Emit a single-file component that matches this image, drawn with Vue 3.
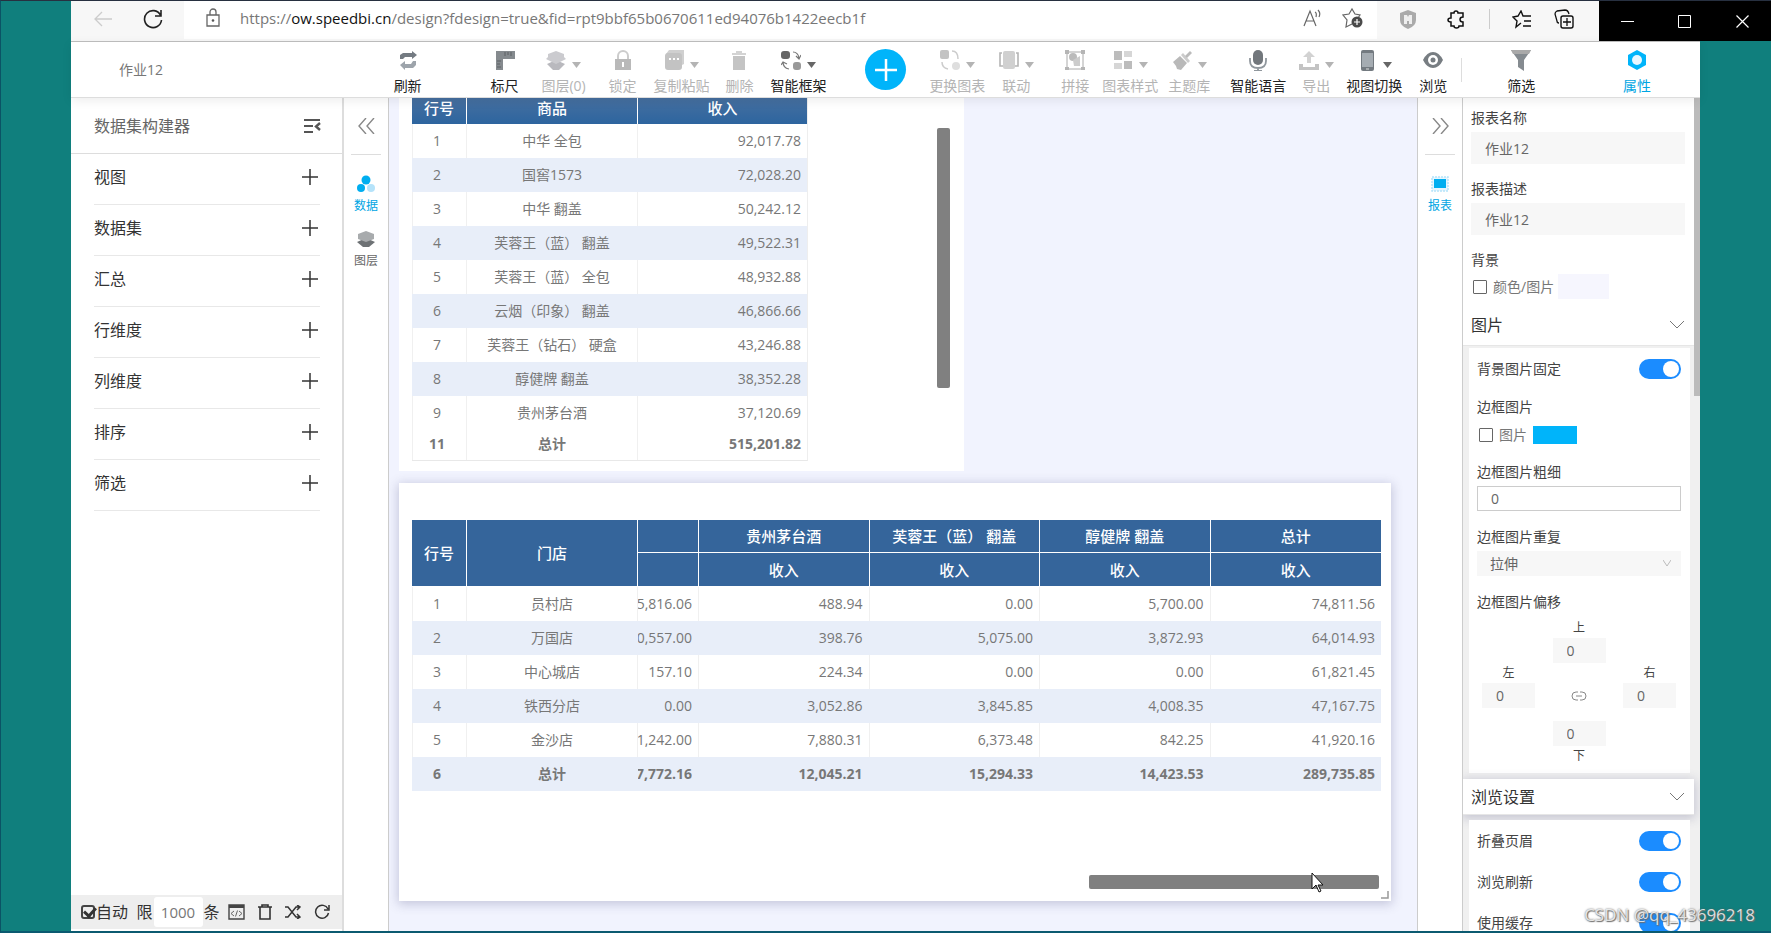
<script setup>
import { ref } from 'vue'

const icons = {
  refresh: '<path d="M2 9V5l3-2h9V1l5 4-5 4V7H7L5 9z" fill="#747b82"/><path d="M18 11v4l-3 3H7v2l-5-5 5-4v3h6l2-3z" fill="#9da4ab"/>',
  ruler: '<path d="M1 1h19v8H8v11H1z" fill="#858a8e"/><path d="M10 2v4M13 2v3M16 2v4M2 11h4M2 14h3M2 17h4" stroke="#5c6165"/>',
  layers: '<path d="M10 10l9 4-6 6H7l-6-6z" fill="#b9b9be"/><path d="M10 1l8 3v3l2 2-10 5L0 9l2-2V4z" fill="#cbcbcf"/>',
  lock: '<path d="M5 9V6a5 5 0 0 1 10 0v3" fill="none" stroke="#ccc" stroke-width="2"/><path d="M2 9h16v11H2z" fill="#b9b9b9"/><path d="M10 12v5" stroke="#fff" stroke-width="2"/>',
  copy: '<path d="M5 0h15v14l-4 2V4H2l3-4z" fill="#d0d0d0"/><rect x="1" y="3" width="17" height="17" rx="3" fill="#c3c3c3"/><path d="M5 9h2m2 0h2m2 0h2" stroke="#fff" stroke-width="2"/>',
  trash: '<path d="M3 3h14v2H3zM7 1h6v2H7z" fill="#d3d3d3"/><path d="M4 6h12v14H4z" fill="#c4c4c4"/>',
  frame: '<rect x="0" y="1" width="9" height="8" rx="3" fill="#666"/><rect x="12" y="12" width="8" height="8" rx="3" fill="#999"/><path d="M12 2q5 0 6 6m-3-2 3 3 2-4M8 19q-6-1-6-7m-2 3 2-3 4 2" fill="none" stroke="#777" stroke-width="1.2"/>',
  change: '<rect x="0" y="0" width="9" height="9" rx="2" fill="#c3c3c3"/><circle cx="16" cy="16" r="4" fill="#dedede"/><path d="M12 1q6 0 6 8M8 19q-6-1-6-7" fill="none" stroke="#ccc" stroke-width="1.5"/>',
  link: '<rect x="4" y="1" width="12" height="18" rx="2" fill="#d0d0d0"/><path d="M3 3H1v13h3M17 3h2v13h-3" fill="none" stroke="#b5b5b5" stroke-width="1.6"/>',
  splice: '<path d="M2 2h16v17H2z" fill="none" stroke="#aaa"/><path d="M0 0h4v4H0zM16 0h4v4h-4zM0 17h4v3H0zM16 17h4v3h-4z" fill="#b5b5b5"/><circle cx="8" cy="7" r="4" fill="#bbb"/><path d="M8 10l7-4v10H9z" fill="#ccc"/>',
  style: '<path d="M1 1h8v9H1zM11 11h8v8h-8z" fill="#bcbcbc"/><path d="M11 1h8v6h-8zM1 13h8v6H1z" fill="#d6d6d6"/>',
  theme: '<path d="M1 12l7-6 7 7-6 7-4-1-1-3z" fill="#b9b9b9"/><path d="M9 5l2-2 7 8-2 2z" fill="#ccc"/><path d="M13 6l5-5 2 2-5 5z" fill="#bbb"/>',
  mic: '<rect x="5" y="0" width="10" height="15" rx="5" fill="#72777c"/><path d="M2 8v3q0 7 8 7t8-7V8M10 18v3M6 21h8" fill="none" stroke="#90979d" stroke-width="1.8"/>',
  export: '<path d="M10 1l6 6h-4v6H8V7H4z" fill="#d2d2d2"/><path d="M0 14h4v3h12v-3h4v6H0z" fill="#c3c3c3"/>',
  phone: '<rect x="4" y="0" width="13" height="21" rx="2" fill="#737a80"/><path d="M5 3h11v14H5z" fill="#a5acb2"/><path d="M9 19h3" stroke="#ddd"/>',
  eye: '<path d="M0 10q4-8 10-8t10 8q-4 8-10 8T0 10z" fill="#777d82"/><circle cx="10" cy="10" r="5" fill="#fff"/><circle cx="10" cy="10" r="2.5" fill="#777d82"/>',
  filter: '<path d="M0 0h20l-7 10v11l-6-4v-7z" fill="#858b90"/><path d="M0 0h20l-2 4H2z" fill="#a9a9a9"/>',
  gear: '<path d="M10 0l9 5v10l-9 5-9-5V5z" fill="#00b4fa"/><circle cx="10" cy="10" r="5" fill="#e8f7ff"/>'
}

const tools = [
  { icon: 'refresh', label: '刷新' },
  { icon: 'ruler', label: '标尺' },
  { icon: 'layers', label: '图层(0)', caret: true, off: true },
  { icon: 'lock', label: '锁定', off: true },
  { icon: 'copy', label: '复制粘贴', caret: true, off: true },
  { icon: 'trash', label: '删除', off: true },
  { icon: 'frame', label: '智能框架', caret: true },
  { add: true, label: '添加' },
  { icon: 'change', label: '更换图表', caret: true, off: true },
  { icon: 'link', label: '联动', caret: true, off: true },
  { icon: 'splice', label: '拼接', off: true },
  { icon: 'style', label: '图表样式', caret: true, off: true },
  { icon: 'theme', label: '主题库', caret: true, off: true },
  { icon: 'mic', label: '智能语言' },
  { icon: 'export', label: '导出', caret: true, off: true },
  { icon: 'phone', label: '视图切换', caret: true },
  { icon: 'eye', label: '浏览' },
  { icon: 'filter', label: '筛选' },
  { icon: 'gear', label: '属性', active: true }
]

const sections = ['视图', '数据集', '汇总', '行维度', '列维度', '排序', '筛选']

const products = [
  ['1', '中华 全包', '92,017.78'],
  ['2', '国窖1573', '72,028.20'],
  ['3', '中华 翻盖', '50,242.12'],
  ['4', '芙蓉王（蓝） 翻盖', '49,522.31'],
  ['5', '芙蓉王（蓝） 全包', '48,932.88'],
  ['6', '云烟（印象） 翻盖', '46,866.66'],
  ['7', '芙蓉王（钻石） 硬盒', '43,246.88'],
  ['8', '醇健牌 翻盖', '38,352.28'],
  ['9', '贵州茅台酒', '37,120.69'],
  ['11', '总计', '515,201.82']
]

const heads = ['', '贵州茅台酒', '芙蓉王（蓝） 翻盖', '醇健牌 翻盖', '总计']
const stores = [
  ['1', '员村店', '5,816.06', '488.94', '0.00', '5,700.00', '74,811.56'],
  ['2', '万国店', '0,557.00', '398.76', '5,075.00', '3,872.93', '64,014.93'],
  ['3', '中心城店', '157.10', '224.34', '0.00', '0.00', '61,821.45'],
  ['4', '铁西分店', '0.00', '3,052.86', '3,845.85', '4,008.35', '47,167.75'],
  ['5', '金沙店', '1,242.00', '7,880.31', '6,373.48', '842.25', '41,920.16'],
  ['6', '总计', '7,772.16', '12,045.21', '15,294.33', '14,423.53', '289,735.85']
]

const limit = ref('1000')
const auto = ref(true)
const name = ref('作业12')
const desc = ref('作业12')
const colorOn = ref(false)
const borderOn = ref(false)
const fixed = ref(true)
const thickness = ref('0')
const offsets = ref({ top: '0', left: '0', right: '0', bottom: '0' })
const switches = ref([
  { id: 'fold', label: '折叠页眉', on: true },
  { id: 'reload', label: '浏览刷新', on: true },
  { id: 'cache', label: '使用缓存', on: true }
])
</script>

<template>
  <div class="screen">
    <header class="browser">
      <div class="nav">
        <button class="bare" aria-label="后退"><svg width="20" height="18" viewBox="0 0 20 18"><path d="M19 9H2M9 2L2 9l7 7" fill="none" stroke="#ccc" stroke-width="1.3" /></svg></button>
        <button class="bare" aria-label="刷新页面"><svg width="20" height="20" viewBox="0 0 20 20"><path d="M17.5 6A8.5 8.5 0 1 0 18.500 11M18 1v6h-6" fill="none" stroke="#222" stroke-width="1.6" /></svg></button>
      </div>
      <div class="address">
        <svg width="16" height="20" viewBox="0 0 16 20"><path d="M2 7h12v11H2zM5 7V4a3 3 0 0 1 6 0v3" fill="none" stroke="#666" stroke-width="1.3" /><circle cx="8" cy="12.500" r="1.300" fill="#555" /></svg>
        <p class="url">https://<span>ow.speedbi.cn</span>/design?fdesign=true&amp;fid=rpt9bbf65b0670611ed94076b1422eecb1f</p>
        <svg width="20" height="20" viewBox="0 0 20 20" fill="none" stroke="#666" stroke-width="1.200"><path d="M2 18L8 3l6 15M4 13h8M13 4q2 1 1 5M16 2q3 3 1 7" /></svg>
        <svg class="fav" width="22" height="22" viewBox="0 0 22 22"><path d="M10 17l-6 3 1-7-4-5 6-1 3-5 3 5 5 1-2 3" fill="none" stroke="#666" stroke-width="1.200" /><circle cx="15" cy="15" r="5.500" fill="#4a4a4a" /><path d="M15 12v6M12 15h6" stroke="#fff" stroke-width="1.200" /></svg>
      </div>
      <div class="extras">
        <svg width="18" height="19" viewBox="0 0 18 19"><path d="M9 0l8 3v7q0 6-8 9-8-3-8-9V3z" fill="#aaa" /><path d="M5 5h3l1 2 1-2h3v9h-3v-3H8v3H5z" fill="#eee" /></svg>
        <svg class="puzzle" width="19" height="19" viewBox="0 0 19 19"><path d="M4 3h3q0-2 2-2t2 2h5v4q-3 0-3 2.500t3 2.500v4h-4q0 2-2.500 2t-2.500-2H4v-4q-3 0-3-2t3-2z" fill="none" stroke="#111" stroke-width="1.500" /></svg>
        <i class="bar"></i>
        <svg width="20" height="19" viewBox="0 0 20 19"><path d="M9 13l-5 4 1-6-4-4 5-1 3-5 2 5h8M12 11h7M11 16h8" fill="none" stroke="#111" stroke-width="1.400" /></svg>
        <svg width="20" height="20" viewBox="0 0 20 20"><rect x="7" y="7" width="12" height="12" rx="2" fill="none" stroke="#111" stroke-width="1.400" /><path d="M5 14q-2 0-2-2L1 5q0-2 2-3l8-1q3 0 4 4M13 9v8M9 13h8" fill="none" stroke="#111" stroke-width="1.300" /></svg>
      </div>
      <div class="window">
        <button class="bare" aria-label="最小化"><svg width="13" height="13" viewBox="0 0 13 13"><path d="M0 6.500h13" stroke="#fff" /></svg></button>
        <button class="bare" aria-label="最大化"><svg width="13" height="13" viewBox="0 0 13 13"><path d="M.5.5h12v12H.5z" fill="none" stroke="#fff" /></svg></button>
        <button class="bare" aria-label="关闭"><svg width="13" height="13" viewBox="0 0 13 13"><path d="M.5.5l12 12M12.500.5l-12 12" stroke="#fff" stroke-width="1.200" /></svg></button>
      </div>
    </header>

    <div class="app">
      <div class="toolbar">
        <h1 class="title">作业12</h1>
        <template v-for="(t, i) in tools" :key="t.label">
          <button v-if="t.add" class="bare add" aria-label="添加" :style="{ gridColumn: i * 2 + 2 }">
            <svg width="24" height="24" viewBox="0 0 24 24"><path d="M12 1v22M1 12h22" stroke="#fff" stroke-width="2.500" /></svg>
          </button>
          <button v-else class="bare tool" :class="{ off: t.off, active: t.active }" :style="{ gridColumn: i * 2 + 2 }">
            <span class="glyph">
              <svg width="20" height="21" viewBox="0 0 20 21" v-html="icons[t.icon]"></svg>
              <svg v-if="t.caret" class="caret" width="9" height="6" viewBox="0 0 9 6"><path d="M0 0h9L4.500 6z" fill="currentColor" /></svg>
            </span>
            <span class="caption">{{ t.label }}</span>
          </button>
        </template>
        <i class="split"></i>
      </div>

      <div class="work">
        <aside class="builder">
          <div class="bhead">
            <h2>数据集构建器</h2>
            <button class="bare" aria-label="折叠"><svg width="17" height="14" viewBox="0 0 17 14"><path d="M0 1h16M0 7h9M0 13h9" fill="none" stroke="#555" stroke-width="1.800" /><path d="M16 4l-4 3.500 4 3.500" fill="none" stroke="#555" stroke-width="2.400" /></svg></button>
          </div>
          <div v-for="s in sections" :key="s" class="brow">
            <span>{{ s }}</span>
            <button class="bare" :aria-label="'添加' + s"><svg width="16" height="16" viewBox="0 0 16 16"><path d="M8 0v16M0 8h16" stroke="#333" stroke-width="1.500" /></svg></button>
          </div>
          <div class="bfoot">
            <label class="auto"><input v-model="auto" class="tick" type="checkbox" />自动</label>
            <label class="limit">限<input v-model="limit" type="text" />条</label>
            <div class="acts">
              <button class="bare" aria-label="脚本"><svg width="17" height="16" viewBox="0 0 17 16"><path d="M1 1h15v14H1z" fill="none" stroke="#444" stroke-width="1.400" /><path d="M1 1h15v3H1z" fill="#444" /><path d="M6 7L3 9.500 6 12M11 7l3 2.500-3 2.500M9.500 6.500l-2 6" fill="none" stroke="#666" /></svg></button>
              <button class="bare" aria-label="清空"><svg width="14" height="16" viewBox="0 0 14 16"><path d="M0 3h14M4 3V1h6v2M2 3v12h10V3" fill="none" stroke="#333" stroke-width="1.600" /></svg></button>
              <button class="bare" aria-label="打乱"><svg width="16" height="14" viewBox="0 0 16 14"><path d="M0 2h3l8 10h3M0 12h3l8-10h3M12 0l3 2-3 3M12 9l3 3-3 2" fill="none" stroke="#333" stroke-width="1.500" /></svg></button>
              <button class="bare" aria-label="重新加载"><svg width="16" height="16" viewBox="0 0 16 16"><path d="M14 5A6.500 6.500 0 1 0 14.500 9M15 1v5h-5" fill="none" stroke="#333" stroke-width="1.500" /></svg></button>
            </div>
          </div>
        </aside>

        <nav class="rail">
          <button class="bare fold" aria-label="收起左栏"><svg width="17" height="16" viewBox="0 0 17 16"><path d="M8 0L1 8l7 8M16 0L9 8l7 8" fill="none" stroke="#888" stroke-width="1.400" /></svg></button>
          <button class="bare item on"><svg width="18" height="18" viewBox="0 0 18 18"><circle cx="9" cy="5" r="4.500" fill="#00aef0" /><circle cx="4" cy="13" r="4" fill="#00aef0" /><circle cx="14" cy="13" r="4" fill="#b5e3fa" /></svg>数据</button>
          <button class="bare item"><svg width="18" height="18" viewBox="0 0 18 18"><path d="M9 8l9 4-6 5H6l-6-5z" fill="#6e7275" /><path d="M9 1l8 3v5l-8 3-8-3V4z" fill="#a8abad" /></svg>图层</button>
        </nav>

        <main class="canvas">
          <section class="widget first">
            <table class="grid one">
              <colgroup><col class="no" /><col class="key" /><col /></colgroup>
              <thead><tr><th>行号</th><th>商品</th><th>收入</th></tr></thead>
              <tbody>
                <tr v-for="r in products" :key="r[0]"><td>{{ r[0] }}</td><td>{{ r[1] }}</td><td class="num">{{ r[2] }}</td></tr>
              </tbody>
            </table>
            <div class="vbar"></div>
          </section>
          <section class="widget second">
            <table class="grid two">
              <colgroup><col class="no" /><col class="key" /><col class="cut" /><col /><col /><col /><col /></colgroup>
              <thead>
                <tr><th rowspan="2">行号</th><th rowspan="2">门店</th><th v-for="h in heads" :key="h">{{ h }}</th></tr>
                <tr class="sub"><th v-for="h in heads" :key="h">{{ h ? '收入' : '' }}</th></tr>
              </thead>
              <tbody>
                <tr v-for="r in stores" :key="r[0]">
                  <td v-for="(c, i) in r" :key="i" :class="{ num: i > 1 }"><div v-if="i === 2" class="clip">{{ c }}</div><template v-else>{{ c }}</template></td>
                </tr>
              </tbody>
            </table>
            <div class="hbar"></div>
            <svg class="grip" width="8" height="8" viewBox="0 0 8 8"><path d="M7 0v7H0" fill="none" stroke="#999" stroke-width="1.500" /></svg>
            <svg class="pointer" width="13" height="21" viewBox="0 0 13 21"><path d="M1 1v16l4-4 3 7 2-1-3-6h5z" fill="#fff" stroke="#111" /></svg>
          </section>
        </main>

        <nav class="rail right">
          <button class="bare fold" aria-label="收起右栏"><svg width="17" height="16" viewBox="0 0 17 16"><path d="M1 0l7 8-7 8M9 0l7 8-7 8" fill="none" stroke="#888" stroke-width="1.400" /></svg></button>
          <button class="bare item on"><svg width="18" height="18" viewBox="0 0 18 18"><path d="M1 2h16v14H1z" fill="#e6f6fe" stroke="#b5e3fa" stroke-width="1.500" stroke-dasharray="2 1" /><path d="M3 4h12v9H3z" fill="#00aef0" /></svg>报表</button>
        </nav>

        <aside class="props">
          <div class="scroll">
            <div class="top">
              <label class="field" for="rname">报表名称</label>
              <input id="rname" v-model="name" class="box tall" type="text" />
              <label class="field" for="rdesc">报表描述</label>
              <input id="rdesc" v-model="desc" class="box tall" type="text" />
              <p class="field">背景</p>
              <div class="line">
                <label><input v-model="colorOn" class="check" type="checkbox" />颜色/图片</label>
                <button class="bare swatch pale" aria-label="背景颜色"></button>
              </div>
            </div>
            <button class="bare group"><span>图片</span><svg width="14" height="8" viewBox="0 0 14 8"><path d="M0 0l7 7 7-7" fill="none" stroke="#777" /></svg></button>
            <div class="card">
              <label class="row">背景图片固定<input v-model="fixed" class="switch" type="checkbox" /></label>
              <p class="field">边框图片</p>
              <div class="line inner">
                <label><input v-model="borderOn" class="check" type="checkbox" />图片</label>
                <button class="bare swatch blue" aria-label="边框颜色"></button>
              </div>
              <label class="field" for="thick">边框图片粗细</label>
              <input id="thick" v-model="thickness" class="box outlined" type="text" />
              <label class="field" for="repeat">边框图片重复</label>
              <div class="pick">
                <select id="repeat" class="box"><option>拉伸</option></select>
                <svg width="8" height="7" viewBox="0 0 8 7"><path d="M0 0l4 6 4-6" fill="none" stroke="#bbb" /></svg>
              </div>
              <p class="field">边框图片偏移</p>
              <div class="offsets">
                <label class="t">上<input v-model="offsets.top" class="box" type="text" /></label>
                <label class="l">左<input v-model="offsets.left" class="box" type="text" /></label>
                <svg class="chain" width="16" height="10" viewBox="0 0 16 10"><path d="M7 1H5a4 4 0 0 0 0 8h2M9 1h2a4 4 0 0 1 0 8H9M5 5h6" fill="none" stroke="#888" /></svg>
                <label class="r">右<input v-model="offsets.right" class="box" type="text" /></label>
                <label class="b"><input v-model="offsets.bottom" class="box" type="text" />下</label>
              </div>
            </div>
            <button class="bare group second"><span>浏览设置</span><svg width="14" height="8" viewBox="0 0 14 8"><path d="M0 0l7 7 7-7" fill="none" stroke="#777" /></svg></button>
            <div class="card view">
              <label v-for="s in switches" :key="s.id" class="row">{{ s.label }}<input v-model="s.on" class="switch" type="checkbox" /></label>
            </div>
          </div>
          <div class="thumb"></div>
        </aside>
      </div>
    </div>
    <p class="mark">CSDN @qq_43696218</p>
  </div>
</template>

<style>
body { background: #107f7d; }
</style>

<style scoped>
* { box-sizing: border-box; }
h1, h2, p { margin: 0; font-weight: 400; }
svg { display: block; flex: none; }
input, select, button { font: inherit; color: inherit; border-radius: 0; }
.bare { border: 0; padding: 0; background: none; display: flex; align-items: center; justify-content: center; }
.screen {
  position: relative; height: 100vh; overflow: hidden; display: flex; flex-direction: column;
  background: #107f7d; border-top: 1px solid #273040; border-left: 1px solid #0b5365; border-bottom: 2px solid #0b5a70;
  font-family: "Open Sans", "Noto Sans CJK SC", sans-serif; font-size: 14px; line-height: 20px; color: #333;
}
.browser { height: 40px; flex: none; display: flex; margin-left: 70px; background: #f7f7f7; }
.nav { width: 113px; display: flex; align-items: center; gap: 30px; padding-left: 22px; padding-bottom: 4px; }
.address { flex: 1; min-width: 0; display: flex; align-items: center; background: #fff; padding: 0 13px 4px 21px; margin-bottom: 2px; }
.url { flex: 1; min-width: 0; margin-left: 19px; font-size: 15px; color: #777; white-space: nowrap; overflow: hidden; }
.url span { color: #111; }
.fav { margin-left: 20px; }
.extras { width: 222px; display: flex; align-items: center; justify-content: space-between; padding: 0 25px 4px 22px; }
.puzzle { margin-left: 8px; }
.bar { width: 1px; height: 20px; background: #ccc; }
.window { width: 172px; background: #000; display: flex; align-items: center; justify-content: space-around; }
.app { flex: 1; min-height: 0; margin: 0 71px 0 70px; display: flex; flex-direction: column; background: #fff; }
.toolbar {
  position: relative; z-index: 2; height: 57px; flex: none; display: grid; background: #fff;
  border-top: 1px solid #bbb; border-bottom: 1px solid #ddd; box-shadow: 0 3px 10px rgba(0, 0, 0, .07);
  grid-template-columns: 323fr 28px 69fr 28px 21fr 48px 21fr 28px 17fr 56px 16fr 28px 17fr 56px 39fr 40px 24fr 56px 17fr 28px 31fr 28px 13fr 56px 10fr 42px 20fr 56px 16fr 28px 16fr 56px 17fr 28px 60fr 28px 88fr 28px 49fr;
}
.title { grid-column: 1; grid-row: 1; padding-left: 48px; align-self: center; color: #777; font-size: 14px; white-space: nowrap; }
.tool { grid-row: 1; flex-direction: column; justify-content: flex-start; padding-top: 8px; gap: 5px; color: #222; white-space: nowrap; }
.tool.off { color: #b4b4b4; }
.tool.active { color: #00a5e3; }
.glyph { display: flex; align-items: flex-end; gap: 6px; }
.caret { margin-bottom: 3px; color: #666; }
.off .caret { color: #b4b4b4; }
.add { grid-row: 1; width: 41px; height: 41px; align-self: center; border-radius: 50%; background: #00b4fa; }
.split { grid-column: 35; grid-row: 1; width: 1px; height: 24px; align-self: center; margin-left: 14px; background: #ddd; }
.work { flex: 1; min-height: 0; display: flex; }
.builder { width: 273px; flex: none; display: flex; flex-direction: column; border-right: 2px solid #ddd; font-size: 16px; }
.bhead { height: 56px; flex: none; display: flex; justify-content: space-between; align-items: center; padding: 0 21px 0 23px; border-bottom: 1px solid #ddd; color: #666; }
.bhead h2 { font-size: 16px; }
.brow { height: 51px; flex: none; display: flex; justify-content: space-between; align-items: center; margin: 0 22px 0 23px; padding: 0 2px 4px 0; border-bottom: 1px solid #e8e8e8; }
.bfoot { height: 34px; margin: auto 0 2px; display: flex; align-items: center; justify-content: space-between; padding: 0 12px 0 10px; background: #eee; font-size: 16px; white-space: nowrap; }
.auto, .limit { display: flex; align-items: center; }
.acts { display: flex; align-items: center; gap: 13px; }
.limit input { width: 49px; height: 30px; border: 0; padding: 0; margin: 0 1px; border-radius: 3px; background: #fff; text-align: center; font-size: 15px; color: #777; }
.tick { appearance: none; width: 14px; height: 14px; margin: 0 1px 0 0; border: 2px solid #444; border-radius: 3px; position: relative; }
.tick:checked::after { content: ""; position: absolute; left: 3px; top: -2px; width: 5px; height: 9px; border: solid #333; border-width: 0 3px 3px 0; transform: rotate(42deg); }
.rail { width: 45px; flex: none; display: flex; flex-direction: column; align-items: center; border-right: 1px solid #ccc; font-size: 12px; line-height: 16px; }
.fold { width: 30px; height: 57px; border-bottom: 1px solid #ddd; }
.item { flex-direction: column; gap: 5px; color: #666; }
.item + .item { margin-top: 16px; }
.fold + .item { margin-top: 20px; }
.item.on { color: #00a5e3; }
.right { border-left: 1px solid #ccc; width: 46px; }
.canvas { flex: 1; min-width: 0; overflow: hidden; background: #f1f3fe; padding: 0 26px 0 10px; display: flex; flex-direction: column; gap: 12px; }
.widget { position: relative; background: #fff; }
.first { width: 57%; height: 373px; flex: none; padding-left: 13px; }
.second { height: 418px; flex: none; padding: 37px 10px 0 13px; box-shadow: 0 2px 10px 1px rgba(60, 60, 110, .25); }
.grid { border-collapse: separate; border-spacing: 0; table-layout: fixed; color: #777; }
.one { width: 396px; border-bottom: 1px solid #e8e8e8; border-right: 1px solid #eee; }
.two { width: 100%; }
.no { width: 55px; }
.key { width: 171px; }
.cut { width: 61px; }
th { height: 33px; padding: 0; background: #35659b; color: #fff; font-size: 15px; font-weight: 500; border-right: 1px solid #fff; border-bottom: 1px solid #fff; }
.sub th { height: 34px; }
.one th { height: 26px; padding-bottom: 6px; border-bottom: 0; background: linear-gradient(#466f9f, #2d659f); }
th:last-child { border-right: 0; }
td { height: 34px; padding: 0; text-align: center; border-right: 1px solid #f0f0f0; white-space: nowrap; }
td:first-child { border-left: 1px solid #f0f0f0; padding-right: 5px; }
td:last-child { border-right: 0; }
tbody tr:nth-child(even) td { background: #e8eef9; border-color: #e8eef9; }
.num { text-align: right; padding-right: 6px; }
tbody tr:last-child td { font-weight: 700; }
.one tbody tr:last-child td { height: 30px; background: #fff; border-color: #f0f0f0; padding-bottom: 2px; }
.clip { display: flex; justify-content: flex-end; overflow: hidden; }
.vbar { position: absolute; right: 14px; top: 30px; width: 13px; height: 260px; border-radius: 2px; background: #808080; }
.hbar { position: absolute; right: 12px; bottom: 12px; width: 290px; height: 14px; border-radius: 2px; background: #808080; }
.grip { position: absolute; right: 2px; bottom: 2px; }
.pointer { position: absolute; right: 67px; bottom: 8px; }
.props { flex: 0 0 237px; position: relative; overflow: hidden; background: #f0f0f0; color: #444; }
.scroll { padding-right: 6px; }
.top { background: #fff; padding: 10px 9px 0 8px; height: 207px; }
.field { display: block; height: 20px; }
.box { display: block; width: 100%; height: 25px; border: 0; padding: 0 0 0 14px; background: #f7f7f7; color: #666; }
.tall { height: 32px; margin: 4px 0 15px; }
.line { display: flex; align-items: center; gap: 4px; height: 25px; margin-top: 4px; color: #777; padding-left: 2px; }
.line label { display: flex; align-items: center; gap: 6px; }
.check { appearance: none; width: 14px; height: 14px; margin: 0; border: 1px solid #666; border-radius: 1px; background: #fff; }
.check:checked { background: #1b8cff; }
.swatch { width: 51px; height: 25px; }
.pale { background: #f6f6fe; }
.blue { width: 44px; height: 18px; background: #00b4fa; }
.group { width: 100%; height: 41px; padding: 0 10px 0 8px; justify-content: space-between; background: #fff; font-size: 16px; color: #333; border-bottom: 1px solid #e6e6e6; }
.card { margin: 2px 4px 6px 6px; padding: 0 9px 0 8px; background: #fff; height: 425px; }
.row { display: flex; justify-content: space-between; align-items: center; height: 41px; }
.row + .field { margin-top: 8px; }
.inner { height: 18px; margin: 9px 0 18px; gap: 6px; }
.outlined { background: #fff; border: 1px solid #ccc; margin: 4px 0 16px; padding-left: 13px; }
.pick { position: relative; margin: 4px 0 16px; }
.pick select { appearance: none; padding-left: 13px; }
.pick svg { position: absolute; right: 10px; top: 9px; }
.switch { appearance: none; width: 42px; height: 20px; margin: 0; border-radius: 10px; background: #bbb; position: relative; }
.switch:checked { background: #1b8cff; }
.switch::before { content: ""; position: absolute; left: 2px; top: 2px; width: 16px; height: 16px; border-radius: 50%; background: #fff; }
.switch:checked::before { left: 24px; }
.offsets { display: grid; grid-template-columns: 53px 1fr 53px 1fr 53px; padding: 0 5px; margin-top: 8px; font-size: 12px; line-height: 16px; text-align: center; }
.offsets .box { font-size: 14px; margin: 2px 0; }
.t { grid-column: 3; grid-row: 1; }
.l { grid-column: 1; grid-row: 2; }
.chain { grid-column: 3; grid-row: 2; justify-self: center; margin-top: 26px; }
.r { grid-column: 5; grid-row: 2; }
.b { grid-column: 3; grid-row: 3; margin-top: 9px; }
.group.second { height: 36px; }
.view { margin-top: 5px; height: 124px; }
.thumb { position: absolute; right: 0; top: 0; width: 6px; height: 298px; background: #bbb; }
.mark { position: absolute; right: 16px; bottom: 4px; font-size: 17px; line-height: 24px; color: rgba(255, 255, 255, .8); text-shadow: 0 0 2px #555, 1px 1px 1px #777; }
</style>
